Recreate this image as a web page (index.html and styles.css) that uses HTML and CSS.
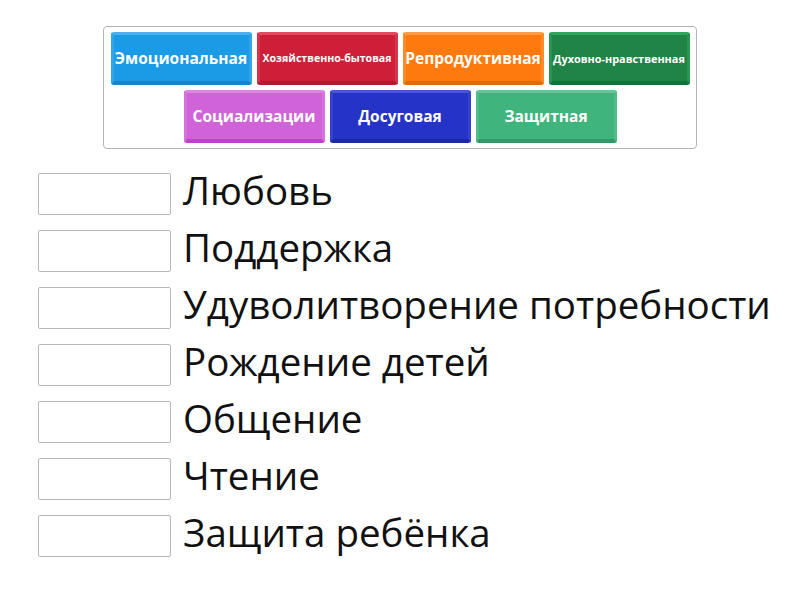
FILE: index.html
```html
<!DOCTYPE html>
<html lang="ru">
<head>
<meta charset="utf-8">
<link rel="stylesheet" href="styles.css">
</head>
<body>
<div class="page">
  <div class="bank">
    <div class="tile blue">Эмоциональная</div>
    <div class="tile red small">Хозяйственно-бытовая</div>
    <div class="tile orange">Репродуктивная</div>
    <div class="tile dgreen small small2">Духовно-нравственная</div>
    <div class="tile magenta">Социализации</div>
    <div class="tile navy">Досуговая</div>
    <div class="tile green">Защитная</div>
  </div>
  <div class="list">
    <div class="row"><div class="slot"></div><span class="label">Любовь</span></div>
    <div class="row"><div class="slot"></div><span class="label">Поддержка</span></div>
    <div class="row"><div class="slot"></div><span class="label">Удуволитворение потребности</span></div>
    <div class="row"><div class="slot"></div><span class="label">Рождение детей</span></div>
    <div class="row"><div class="slot"></div><span class="label">Общение</span></div>
    <div class="row"><div class="slot"></div><span class="label">Чтение</span></div>
    <div class="row"><div class="slot"></div><span class="label">Защита ребёнка</span></div>
  </div>
</div>
</body>
</html>
```
FILE: styles.css
```css
html, body {
  margin: 0;
  padding: 0;
  background: #fff;
  font-family: "Open Sans", "DejaVu Sans", sans-serif;
}
.page {
  width: 800px;
  height: 600px;
  padding-top: 26px;
  box-sizing: border-box;
}
.bank {
  width: 594px;
  margin: 0 auto;
  box-sizing: border-box;
  border: 1px solid #b4b4b4;
  border-radius: 4px;
  padding: 5px 6px;
  display: flex;
  flex-wrap: wrap;
  justify-content: center;
  gap: 5px;
}
.tile {
  width: 141px;
  height: 53px;
  box-sizing: border-box;
  border-radius: 3px;
  display: flex;
  align-items: center;
  justify-content: center;
  color: #fff;
  font-weight: 700;
  font-size: 15.5px;
  white-space: nowrap;
  border-style: solid;
  border-width: 3px 3px 4px 3px;
}
.tile.small { font-size: 10.6px; }
.tile.small2 { font-size: 10.9px; }
.blue { background: #1b9ae6; border-color: #4db1ee #33a6ea #1584cc #33a6ea; }
.red { background: #cd1f37; border-color: #e04a5e #d83348 #b3192f #d83348; }
.orange { background: #ff7a0e; border-color: #ff9a45 #ff8a2a #e06a05 #ff8a2a; }
.dgreen { background: #1f8446; border-color: #2fa65c #28964f #17703a #28964f; }
.magenta { background: #d063d8; border-color: #dc85e2 #d672dd #c042cc #d672dd; }
.navy { background: #2533c6; border-color: #4954d8 #3642cf #1a27a6 #3642cf; }
.green { background: #3fb47c; border-color: #64c896 #50bd88 #2f9a66 #50bd88; }
.list {
  margin-top: 24px;
  padding-left: 38px;
  display: flex;
  flex-direction: column;
  gap: 15px;
}
.row {
  display: flex;
  align-items: flex-start;
  height: 42px;
}
.slot {
  width: 133px;
  height: 42px;
  box-sizing: border-box;
  border: 1px solid #b9b9b9;
  border-radius: 2px;
  flex-shrink: 0;
}
.label {
  margin-left: 12px;
  font-size: 38.5px;
  color: #111;
  white-space: nowrap;
  line-height: 34px;
}
```
